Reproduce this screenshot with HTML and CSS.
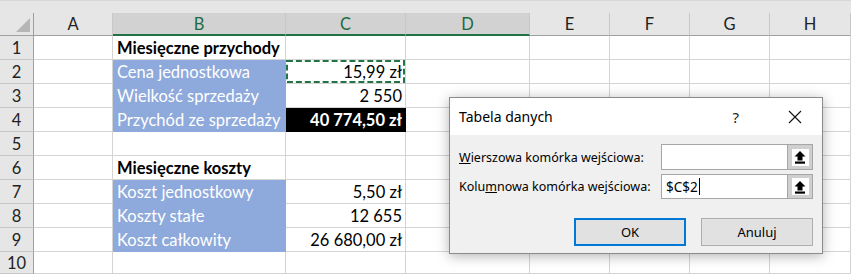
FILE: index.html
```html
<!DOCTYPE html>
<html lang="pl">
<head>
    <meta charset="UTF-8">
    <title>Tabela danych</title>
    <link rel="stylesheet" href="styles.css">
</head>
<body>
    <div class="sheet">
        <div class="band"></div>

        <!-- Worksheet grid -->
        <div class="grid">
            <div class="corner"><span class="corner-tri"></span></div>
            <div class="col-head">A</div>
            <div class="col-head sel">B</div>
            <div class="col-head sel">C</div>
            <div class="col-head sel">D</div>
            <div class="col-head">E</div>
            <div class="col-head">F</div>
            <div class="col-head">G</div>
            <div class="col-head">H</div>

            <div class="row-head">1</div>
            <div class="cell"></div>
            <div class="cell bold">Miesięczne przychody</div>
            <div class="cell"></div><div class="cell"></div><div class="cell"></div><div class="cell"></div><div class="cell"></div><div class="cell"></div>

            <div class="row-head">2</div>
            <div class="cell"></div>
            <div class="cell blue">Cena jednostkowa</div>
            <div class="cell num copied">15,99 zł
                <svg class="ants" viewBox="0 0 120 24" preserveAspectRatio="none"><rect x="1" y="1" width="118" height="22" fill="none" stroke="#217346" stroke-width="2" stroke-dasharray="6 3"/></svg>
            </div>
            <div class="cell"></div><div class="cell"></div><div class="cell"></div><div class="cell"></div><div class="cell"></div>

            <div class="row-head">3</div>
            <div class="cell"></div>
            <div class="cell blue">Wielkość sprzedaży</div>
            <div class="cell num">2 550</div>
            <div class="cell"></div><div class="cell"></div><div class="cell"></div><div class="cell"></div><div class="cell"></div>

            <div class="row-head">4</div>
            <div class="cell"></div>
            <div class="cell blue">Przychód ze sprzedaży</div>
            <div class="cell num dark">40 774,50 zł</div>
            <div class="cell"></div><div class="cell"></div><div class="cell"></div><div class="cell"></div><div class="cell"></div>

            <div class="row-head">5</div>
            <div class="cell"></div><div class="cell"></div><div class="cell"></div><div class="cell"></div><div class="cell"></div><div class="cell"></div><div class="cell"></div><div class="cell"></div>

            <div class="row-head">6</div>
            <div class="cell"></div>
            <div class="cell bold">Miesięczne koszty</div>
            <div class="cell"></div><div class="cell"></div><div class="cell"></div><div class="cell"></div><div class="cell"></div><div class="cell"></div>

            <div class="row-head">7</div>
            <div class="cell"></div>
            <div class="cell blue">Koszt jednostkowy</div>
            <div class="cell num">5,50 zł</div>
            <div class="cell"></div><div class="cell"></div><div class="cell"></div><div class="cell"></div><div class="cell"></div>

            <div class="row-head">8</div>
            <div class="cell"></div>
            <div class="cell blue">Koszty stałe</div>
            <div class="cell num">12 655</div>
            <div class="cell"></div><div class="cell"></div><div class="cell"></div><div class="cell"></div><div class="cell"></div>

            <div class="row-head">9</div>
            <div class="cell"></div>
            <div class="cell blue">Koszt całkowity</div>
            <div class="cell num">26 680,00 zł</div>
            <div class="cell"></div><div class="cell"></div><div class="cell"></div><div class="cell"></div><div class="cell"></div>

            <div class="row-head">10</div>
            <div class="cell"></div><div class="cell"></div><div class="cell"></div><div class="cell"></div><div class="cell"></div><div class="cell"></div><div class="cell"></div><div class="cell"></div>
        </div>

        <!-- Data table dialog -->
        <div class="dialog">
            <div class="dialog-title">
                <span class="title-text">Tabela danych</span>
                <span class="title-help">?</span>
                <svg class="title-close" width="14" height="14" viewBox="0 0 14 14"><path d="M1 1 L13 13 M13 1 L1 13" stroke="#111" stroke-width="1.1" fill="none"/></svg>
            </div>
            <div class="dialog-body">
                <div class="field-row">
                    <label class="field-label"><u>W</u>ierszowa komórka wejściowa:</label>
                    <div class="ref-input">
                        <span class="ref-value"></span>
                        <button class="ref-btn"><span class="ref-icon">
                            <svg width="14" height="14" viewBox="0 0 14 14"><path d="M7 1 L1.5 6.5 L4.5 6.5 L4.5 10.5 L9.5 10.5 L9.5 6.5 L12.5 6.5 Z" fill="#000"/><rect x="2" y="11.5" width="10" height="2.2" fill="#000"/></svg>
                        </span></button>
                    </div>
                </div>
                <div class="field-row">
                    <label class="field-label">Kolu<u>m</u>nowa komórka wejściowa:</label>
                    <div class="ref-input">
                        <span class="ref-value">$C$2<span class="caret"></span></span>
                        <button class="ref-btn"><span class="ref-icon">
                            <svg width="14" height="14" viewBox="0 0 14 14"><path d="M7 1 L1.5 6.5 L4.5 6.5 L4.5 10.5 L9.5 10.5 L9.5 6.5 L12.5 6.5 Z" fill="#000"/><rect x="2" y="11.5" width="10" height="2.2" fill="#000"/></svg>
                        </span></button>
                    </div>
                </div>
                <div class="dialog-buttons">
                    <button class="dlg-btn default">OK</button>
                    <button class="dlg-btn">Anuluj</button>
                </div>
            </div>
        </div>
    </div>
</body>
</html>
```

FILE: styles.css
```css
/* Reset */
* {
    margin: 0;
    padding: 0;
    box-sizing: border-box;
}

body {
    width: 851px;
    height: 274px;
    overflow: hidden;
    background-color: #fff;
    font-family: Lato, "Liberation Sans", sans-serif;
}

.sheet {
    position: relative;
    width: 851px;
    height: 274px;
}

/* Strip above the column headers */
.band {
    height: 13px;
    background-color: #e6e6e6;
    border-top: 1px solid #d6d6d6;
}

/* Worksheet grid */
.grid {
    display: grid;
    grid-template-columns: 34px 79px 173px 120px 124px 80px 80px 80px 81px;
    grid-template-rows: 23px repeat(9, 24px) 22px;
}

.corner {
    position: relative;
    background-color: #e6e6e6;
    border-right: 1px solid #9f9f9f;
    border-bottom: 1px solid #9f9f9f;
}

.corner-tri {
    position: absolute;
    right: 3px;
    bottom: 3px;
    width: 0;
    height: 0;
    border-left: 14px solid transparent;
    border-bottom: 14px solid #b6b6b6;
}

.col-head {
    display: flex;
    align-items: center;
    justify-content: center;
    background-color: #e6e6e6;
    border-right: 1px solid #c8c8c8;
    border-bottom: 1px solid #9f9f9f;
    font-size: 16.5px;
    color: #222;
}

.col-head.sel {
    background-color: #d2d2d2;
    border-bottom: 2px solid #217346;
    color: #1e6b41;
}

.row-head {
    display: flex;
    align-items: center;
    justify-content: center;
    background-color: #e6e6e6;
    border-right: 1px solid #9f9f9f;
    border-bottom: 1px solid #c8c8c8;
    font-size: 16.5px;
    color: #222;
}

.cell {
    position: relative;
    display: flex;
    align-items: center;
    padding: 1px 4px 0 4px;
    border-right: 1px solid #d4d4d4;
    border-bottom: 1px solid #d4d4d4;
    font-size: 16.5px;
    color: #000;
    white-space: nowrap;
}

.cell.bold {
    font-weight: bold;
}

.cell.blue {
    background-color: #8ea9db;
    border-color: #8ea9db;
    color: #fff;
}

.cell.num {
    justify-content: flex-end;
    padding-right: 3px;
}

.cell.dark {
    background-color: #000;
    border-color: #000;
    color: #fff;
    font-weight: bold;
}

/* Copy marquee on C2 */
.ants {
    position: absolute;
    left: 0;
    top: 0;
    width: 100%;
    height: 100%;
}

/* Dialog */
.dialog {
    position: absolute;
    left: 449px;
    top: 97px;
    width: 374px;
    height: 157px;
    background-color: #f0f0f0;
    border: 1px solid #8a8a8a;
    box-shadow: 0 2px 12px rgba(0,0,0,0.3);
    font-family: "Noto Sans", "Open Sans", sans-serif;
    font-size: 12.5px;
    color: #000;
    display: flex;
    flex-direction: column;
}

.dialog-title {
    height: 37px;
    background-color: #fff;
    display: flex;
    align-items: center;
    padding-left: 9px;
}

.title-text {
    flex: 1;
    font-size: 14px;
}

.title-help {
    font-size: 15px;
    margin-right: 49px;
    color: #222;
}

.title-close {
    margin-right: 20px;
}

.dialog-body {
    padding: 9px 9px 0 9px;
    display: flex;
    flex-direction: column;
    gap: 4px;
}

.field-row {
    display: flex;
    align-items: center;
    justify-content: space-between;
}

.field-label {
    color: #000;
}

.ref-input {
    width: 152px;
    height: 26px;
    background-color: #fff;
    border: 1px solid #a6a6a6;
    display: flex;
}

.field-row + .field-row .ref-input {
    height: 25px;
}

.ref-value {
    flex: 1;
    display: flex;
    align-items: center;
    padding-left: 4px;
    font-size: 13.5px;
}

.caret {
    display: inline-block;
    width: 1px;
    height: 17px;
    background-color: #000;
    margin-left: 1px;
}

.ref-btn {
    width: 25px;
    height: 100%;
    background-color: #cfcfcf;
    border: none;
    border-left: 1px solid #a6a6a6;
    display: flex;
    align-items: center;
    justify-content: center;
}

.ref-icon {
    width: 17px;
    height: 17px;
    background-color: #fff;
    display: flex;
    align-items: center;
    justify-content: center;
}

.dialog-buttons {
    display: flex;
    justify-content: flex-end;
    gap: 15px;
    margin-top: 15px;
}

.dlg-btn {
    width: 112px;
    height: 28px;
    background-color: #e1e1e1;
    border: 1px solid #adadad;
    font-family: "Noto Sans", "Open Sans", sans-serif;
    font-size: 13px;
    color: #000;
}

.dlg-btn.default {
    border: 2px solid #0078d7;
}
```
